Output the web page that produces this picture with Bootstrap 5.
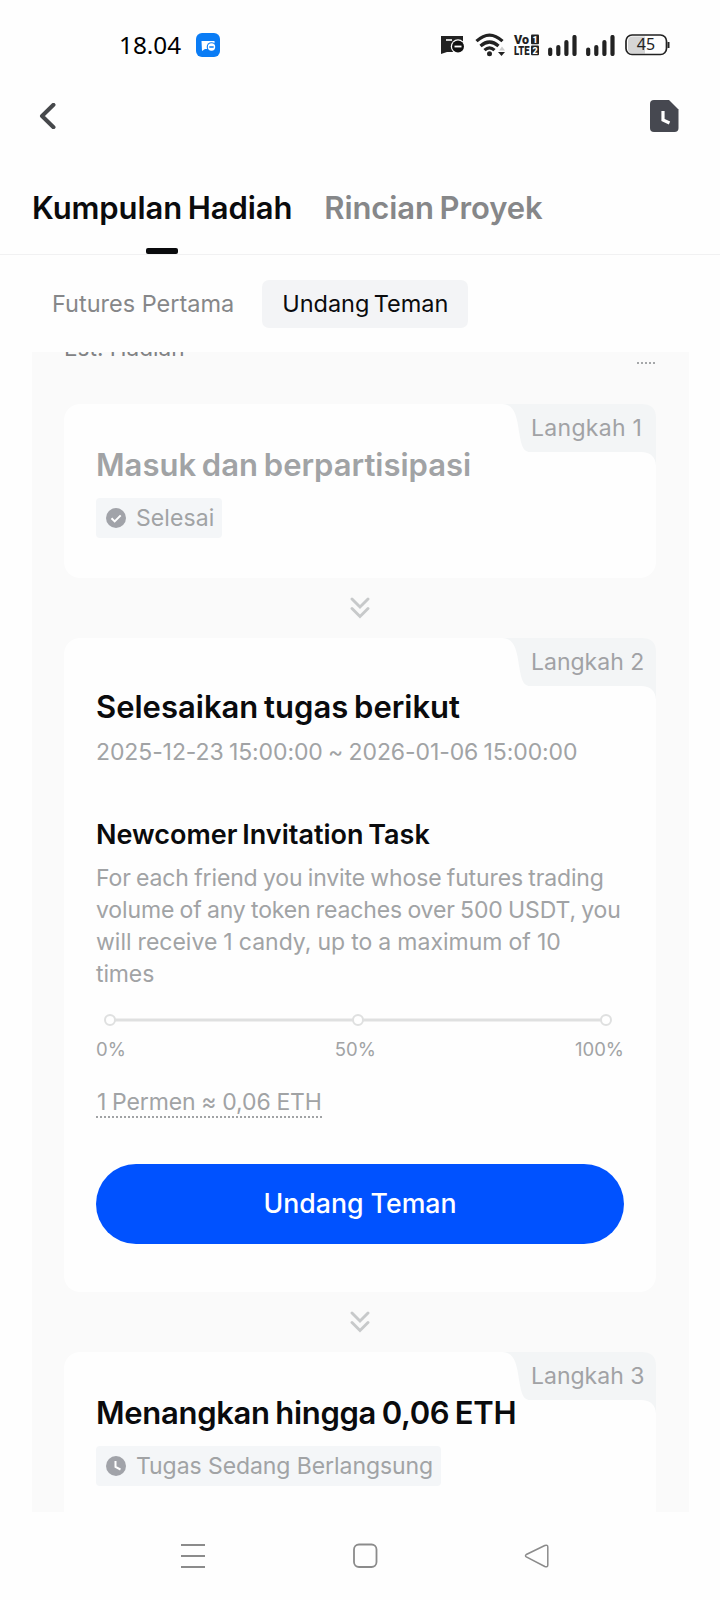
<!DOCTYPE html>
<html lang="id">
<head>
<meta charset="utf-8">
<meta name="viewport" content="width=device-width, initial-scale=1">
<title>Kumpulan Hadiah</title>
<link href="https://cdn.jsdelivr.net/npm/bootstrap@5.3.0/dist/css/bootstrap.min.css" rel="stylesheet">
<style>
  body { font-family: Inter, "Liberation Sans", sans-serif; color: #0a0b0d; background: #fefefe; font-size: 23px; line-height: 32px; white-space: nowrap; }
  svg { display: block; flex: none; }
  .screen { width: 720px; height: 1600px; }
  .statusbar { height: 90px; padding: 0 50px 0 119px; }
  .clock { font: 24.3px/32px "Noto Sans", sans-serif; color: #000; width: 77px; }
  .topbar { height: 82px; padding: 10px 41px 0 39px; align-items: flex-start; }
  .tabs { height: 83px; padding: 17px 32px 0; border-bottom: 1px solid #f1f1f2; gap: 32px; }
  .tab-link { font-size: 31px; line-height: 38px; font-weight: 600; color: #868789; word-spacing: -2px; letter-spacing: -.1px; }
  .tab-link.active { color: #0a0b0d; }
  .tab-link.active::after { content: ""; display: block; width: 32px; height: 6px; border-radius: 2px; background: #0a0b0d; margin: 21px auto 0; }
  .pills { height: 97px; padding: 25px 32px 0; gap: 8px; }
  .pill { height: 48px; line-height: 47px; padding: 0 20px; color: #868789; border-radius: 7px; font-size: 23.5px; }
  .pill.active { background: #f3f4f6; color: #0a0b0d; word-spacing: -2px; letter-spacing: -.05px; }
  .panel { width: 657px; height: 1160px; margin-left: 32px; padding: 0 33px 0 32px; background: #fafafa; }
  .est { height: 52px; color: #818284; }
  .est span { margin-top: -20px; font-size: 22.6px; }
  .dots { width: 19px; height: 2px; margin-top: 10px; background: repeating-linear-gradient(90deg, #a5a7a9 0 2px, transparent 2px 4px); }
  .step { background: #fefefe; border-radius: 16px; padding: 0 32px; }
  .step-tab { width: 154px; height: 62px; }
  .step-tab span { left: 29px; top: 8px; color: #a1a2a5; }
  .ttl { font-size: 31px; line-height: 40px; font-weight: 600; word-spacing: -2px; }
  .muted { color: #a1a3a5; }
  .tag { background: #f4f6f8; border-radius: 4px; color: #a1a3a5; height: 40px; line-height: 39px; padding: 0 8px 0 10px; gap: 10px; }
  .arrow { height: 60px; padding-top: 19px; }
  .date { word-spacing: -1px; letter-spacing: -.1px; }
  .task { font-size: 27px; line-height: 34px; font-weight: 600; word-spacing: -2px; }
  .desc { word-spacing: -1px; letter-spacing: -.13px; }
  .desc .looser { word-spacing: -.4px; letter-spacing: 0; }
  .pct { font-size: 18.5px; line-height: 24px; }
  .rate { height: 37px; line-height: 42px; width: 226px; padding-left: 1px; word-spacing: -.5px; letter-spacing: -.12px; background: repeating-linear-gradient(90deg, #a1a3a5 0 2px, transparent 2px 4px) bottom / 100% 2px no-repeat; }
  .invite { height: 80px; border-radius: 40px; background: #0052ff; color: #fff; font-size: 26.7px; font-weight: 500; border: 0; padding: 0 0 2px; }
  .navbtns { height: 88px; padding: 31px 0 0 180px; gap: 147px; }
</style>
</head>
<body>
<svg width="0" height="0" class="position-absolute" aria-hidden="true">
  <symbol id="chev" viewBox="0 0 20 22"><path d="M2 2l8 8 8-8M2 11.500l8 8 8-8" fill="none" stroke="#c7c9ca" stroke-width="2.900" stroke-linecap="round"/></symbol>
  <symbol id="flap" viewBox="0 0 154 62"><path d="M0 0H140Q154 0 154 14V62Q153 48 139 48H28C20 48 19 38 17 28C15 12 12 0 0 0Z" fill="#f3f5f6"/></symbol>
  <symbol id="bars" viewBox="0 0 29 21"><path d="M2.200 14.500v4.500M10.300 12V19M18.400 7V19M26.500 2v17" fill="none" stroke="#222" stroke-width="4.200" stroke-linecap="round"/></symbol>
</svg>
<main class="screen overflow-hidden">
  <div class="statusbar d-flex align-items-center">
    <span class="clock">18.04</span>
    <svg width="24" height="24" viewBox="0 0 24 24"><rect width="24" height="24" rx="6" fill="#0a7cf5"/><path d="M5.500 8H18.500V16H9L6 18Z" fill="#fff"/><circle cx="15.500" cy="14" r="4.800" fill="#0a7cf5"/><circle cx="15.500" cy="14" r="3.700" fill="#fff"/><path d="M13.300 14h4.400" stroke="#0a7cf5" stroke-width="1.500"/></svg>
    <div class="d-flex align-items-center ms-auto">
      <svg width="25" height="20" viewBox="0 0 25 20" style="margin-right:9px"><path d="M0 1H22V17H6L0 19Z" fill="#222"/><path d="M5 5h6" stroke="#fff" stroke-width="1.600"/><circle cx="17" cy="11.500" r="7.200" fill="#fff"/><circle cx="17" cy="11.500" r="6" fill="#111"/><path d="M13.500 11.500h7" stroke="#fff" stroke-width="1.800"/></svg>
      <svg width="30" height="24" viewBox="0 0 30 24" style="margin-right:9px"><path d="M1.500 8.200Q14.500-4 27.500 8.200M5.500 13Q14.500 5 23.500 13M9.500 17.200Q14.500 12.500 19.500 17.200" fill="none" stroke="#222" stroke-width="3.200"/><circle cx="14.500" cy="20.800" r="2.500" fill="#222"/><path d="M24 17.500l3-4 3 4z" fill="#ccc"/><path d="M23 19h7l-3.500 4z" fill="#222"/></svg>
      <svg class="overflow-visible" width="26" height="22" viewBox="0 0 26 22" style="margin-right:8px" font-family="Roboto" font-weight="900" fill="#222"><text x="0" y="9.500" font-size="12" textLength="15" lengthAdjust="spacingAndGlyphs">Vo</text><text x="0" y="21" font-size="12" textLength="15.500" lengthAdjust="spacingAndGlyphs">LTE</text><rect x="17" y=".5" width="8" height="9.800" rx="1"/><rect x="17" y="11.500" width="8" height="9.800" rx="1"/><g fill="#fff" font-size="9" text-anchor="middle"><text x="21" y="8.600">1</text><text x="21" y="19.600">2</text></g></svg>
      <svg width="29" height="21" style="margin-right:9px"><use href="#bars"/></svg>
      <svg width="29" height="21" style="margin-right:10px"><use href="#bars"/></svg>
      <svg width="45" height="22" viewBox="0 0 45 22"><path d="M7 2.500H20V19.500H7Q3 19 3 15V7Q3 3 7 2.500Z" fill="#d5d5d5"/><rect x="1" y="1" width="40.500" height="19.500" rx="6" fill="none" stroke="#222" stroke-width="1.700"/><path d="M43.500 8v6" stroke="#222" stroke-width="2"/><text x="21" y="16.300" font-family="Noto Sans" font-size="16" text-anchor="middle" fill="#222">45</text></svg>
    </div>
  </div>
  <header class="topbar d-flex justify-content-between">
    <svg width="18" height="26" viewBox="0 0 18 26" style="margin-top:3px"><path d="M14.500 1.800L3 13 14.500 24.200" fill="none" stroke="#46484b" stroke-width="4" stroke-linecap="round" stroke-linejoin="round"/></svg>
    <svg width="29" height="32" viewBox="0 0 29 32"><path d="M4 0H19L28.500 9.500V28Q28.500 32 24.500 32H4Q0 32 0 28V4Q0 0 4 0Z" fill="#464850"/><path d="M13 11v9l6.500 3" fill="none" stroke="#fff" stroke-width="3.200"/></svg>
  </header>
  <nav class="tabs d-flex">
    <div class="tab-link active">Kumpulan Hadiah</div>
    <div class="tab-link">Rincian Proyek</div>
  </nav>
  <div class="pills d-flex">
    <div class="pill">Futures Pertama</div>
    <div class="pill active">Undang Teman</div>
  </div>
  <section class="panel overflow-hidden">
    <div class="est d-flex justify-content-between overflow-hidden"><span>Est. Hadiah</span><div class="dots"></div></div>

    <article class="step position-relative" style="height:174px;padding-top:41px">
      <div class="step-tab position-absolute top-0 end-0"><svg width="154" height="62"><use href="#flap"/></svg><span class="position-absolute" style="letter-spacing:.3px">Langkah 1</span></div>
      <div class="ttl muted">Masuk dan berpartisipasi</div>
      <div class="d-flex" style="margin-top:13px"><div class="tag d-flex align-items-center" style="letter-spacing:.1px">
        <svg width="20" height="20" viewBox="0 0 20 20"><circle cx="10" cy="10" r="10" fill="#a1a3a9"/><path d="M5.500 10.200l3.200 3.200 6-6" fill="none" stroke="#fff" stroke-width="2"/></svg>Selesai</div></div>
    </article>
    <div class="arrow d-flex justify-content-center"><svg width="20" height="22"><use href="#chev"/></svg></div>

    <article class="step position-relative" style="height:654px;padding-top:49px">
      <div class="step-tab position-absolute top-0 end-0"><svg width="154" height="62"><use href="#flap"/></svg><span class="position-absolute">Langkah 2</span></div>
      <div class="ttl">Selesaikan tugas berikut</div>
      <div class="date muted" style="margin-top:9px">2025-12-23 15:00:00 ~ 2026-01-06 15:00:00</div>
      <div class="task" style="margin-top:50px">Newcomer Invitation Task</div>
      <div class="desc muted" style="margin-top:10px">For each friend you invite whose futures trading<br>volume of any token reaches over 500 USDT, you<br><span class="looser">will receive 1 candy, up to a maximum of 10</span><br>times</div>
      <svg width="528" height="14" viewBox="0 0 528 14" style="margin-top:23px"><path d="M14 7H510" stroke="#dfe0e0" stroke-width="3"/><g fill="#fff" stroke="#dfe0e0" stroke-width="2"><circle cx="14" cy="7" r="5"/><circle cx="262" cy="7" r="5"/><circle cx="510" cy="7" r="5"/></g></svg>
      <div class="pct muted d-flex justify-content-between" style="margin-top:10px"><span>0%</span><span style="margin-left:10px">50%</span><span>100%</span></div>
      <div class="rate muted" style="margin-top:20px">1 Permen ≈ 0,06 ETH</div>
      <button class="invite btn w-100" style="margin-top:46px">Undang Teman</button>
    </article>
    <div class="arrow d-flex justify-content-center"><svg width="20" height="22"><use href="#chev"/></svg></div>

    <article class="step position-relative" style="height:200px;padding-top:41px">
      <div class="step-tab position-absolute top-0 end-0"><svg width="154" height="62"><use href="#flap"/></svg><span class="position-absolute">Langkah 3</span></div>
      <div class="ttl" style="letter-spacing:-.3px">Menangkan hingga 0,06 ETH</div>
      <div class="d-flex" style="margin-top:13px"><div class="tag d-flex align-items-center" style="letter-spacing:-.07px">
        <svg width="20" height="20" viewBox="0 0 20 20"><circle cx="10" cy="10" r="10" fill="#a1a3a9"/><path d="M9.500 5v6l5 2.500" fill="none" stroke="#fff" stroke-width="2"/></svg>Tugas Sedang Berlangsung</div></div>
    </article>
  </section>
  <footer class="navbtns d-flex">
    <svg width="26" height="26" viewBox="0 0 26 26" fill="none" stroke="#8b8b8b" stroke-width="1.800"><path d="M1 2h24M1 13h24M1 24h24"/></svg>
    <svg width="26" height="26" viewBox="0 0 26 26" fill="none" stroke="#8b8b8b" stroke-width="1.800"><rect x="1" y="1.500" width="22.500" height="22.500" rx="5"/></svg>
    <svg class="overflow-visible" width="26" height="26" viewBox="0 0 26 26" fill="none" stroke="#8b8b8b" stroke-width="1.500" stroke-linejoin="round"><path d="M.3 11.500Q-1.300 12.700 .3 13.800L18.800 23.500Q21.800 24.500 21.800 22V4Q21.800 1.500 18.800 2.500Z"/></svg>
  </footer>
</main>
<script src="https://cdn.jsdelivr.net/npm/bootstrap@5.3.0/dist/js/bootstrap.bundle.min.js"></script>
</body>
</html>
